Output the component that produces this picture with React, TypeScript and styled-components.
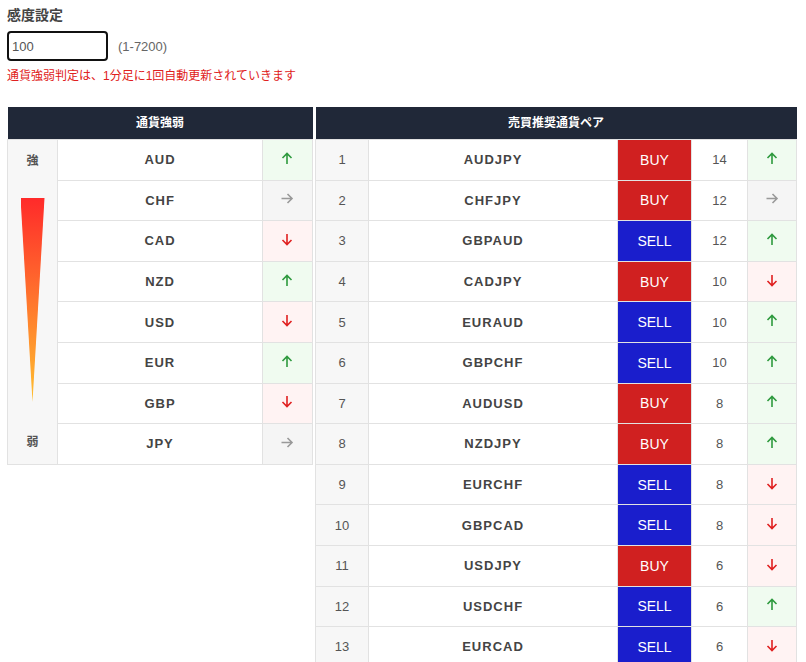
import React from "react";
import styled, { createGlobalStyle } from "styled-components";

type Dir = "up" | "right" | "down";

const currencies: { code: string; dir: Dir }[] = [
  { code: "AUD", dir: "up" },
  { code: "CHF", dir: "right" },
  { code: "CAD", dir: "down" },
  { code: "NZD", dir: "up" },
  { code: "USD", dir: "down" },
  { code: "EUR", dir: "up" },
  { code: "GBP", dir: "down" },
  { code: "JPY", dir: "right" },
];

const pairs: { pair: string; side: "BUY" | "SELL"; score: number; dir: Dir }[] = [
  { pair: "AUDJPY", side: "BUY", score: 14, dir: "up" },
  { pair: "CHFJPY", side: "BUY", score: 12, dir: "right" },
  { pair: "GBPAUD", side: "SELL", score: 12, dir: "up" },
  { pair: "CADJPY", side: "BUY", score: 10, dir: "down" },
  { pair: "EURAUD", side: "SELL", score: 10, dir: "up" },
  { pair: "GBPCHF", side: "SELL", score: 10, dir: "up" },
  { pair: "AUDUSD", side: "BUY", score: 8, dir: "up" },
  { pair: "NZDJPY", side: "BUY", score: 8, dir: "up" },
  { pair: "EURCHF", side: "SELL", score: 8, dir: "down" },
  { pair: "GBPCAD", side: "SELL", score: 8, dir: "down" },
  { pair: "USDJPY", side: "BUY", score: 6, dir: "down" },
  { pair: "USDCHF", side: "SELL", score: 6, dir: "up" },
  { pair: "EURCAD", side: "SELL", score: 6, dir: "down" },
];

const GlobalStyle = createGlobalStyle`
  body {
    margin: 0;
    font-family: "Liberation Sans", Arial, "Noto Sans CJK JP", sans-serif;
    color: #333;
    background: #fff;
  }
`;

const Page = styled.div`
  padding: 7px 7px 0 7px;
  height: 662px;
  box-sizing: border-box;
  overflow: hidden;
`;

const Label = styled.div`
  font-size: 14px;
  line-height: 16px;
  font-weight: bold;
  color: #444;
  margin-bottom: 8px;
`;

const InputRow = styled.div`
  display: flex;
  align-items: center;
  gap: 10px;
`;

const Input = styled.input`
  width: 101px;
  height: 30px;
  box-sizing: border-box;
  padding: 0 3px;
  border: 2px solid #111;
  border-radius: 4px;
  font-family: inherit;
  font-size: 13px;
  color: #555;
  outline: none;
`;

const Range = styled.span`
  font-size: 13px;
  color: #666;
`;

const Notice = styled.div`
  margin-top: 8px;
  font-size: 12px;
  line-height: 14px;
  color: #e02020;
`;

const Tables = styled.div`
  display: flex;
  gap: 2px;
  margin-top: 24px;
  align-items: flex-start;
`;

const Table = styled.table<{ $w: number }>`
  width: ${(p) => p.$w}px;
  border-collapse: collapse;
  table-layout: fixed;
`;

const Head = styled.th`
  background: #202838;
  color: #fff;
  font-size: 12px;
  line-height: 14px;
  height: 32px;
  padding: 0;
  font-weight: bold;
`;

const Cell = styled.td<{ $bg?: string }>`
  height: 39.6px;
  padding: 0;
  border: 1px solid #e2e2e2;
  text-align: center;
  font-size: 13px;
  color: #555;
  background: ${(p) => p.$bg || "#fff"};
`;

const Code = styled(Cell)`
  font-weight: bold;
  letter-spacing: 1px;
  color: #444;
`;

const Side = styled.td<{ $buy: boolean }>`
  padding: 0;
  border: 1px solid #e2e2e2;
  text-align: center;
  font-size: 14px;
  color: #fff;
  background: ${(p) => (p.$buy ? "#d02020" : "#1a1ecc")};
`;

const Scale = styled.td`
  background: #f7f7f7;
  border: 1px solid #e2e2e2;
  padding: 0;
  vertical-align: top;
`;

const ScaleInner = styled.div`
  height: 323px;
  display: flex;
  flex-direction: column;
  align-items: center;
  justify-content: space-between;
  padding: 11px 0 14px;
  box-sizing: border-box;
  font-size: 12px;
  font-weight: bold;
  color: #555;
`;

const Wedge = styled.div`
  width: 24px;
  height: 204px;
  background: linear-gradient(#ff2a2a, #ffc030);
  clip-path: polygon(0 0, 100% 0, 50% 100%);
`;

const arrowBg: Record<Dir, string> = { up: "#f0fbf0", right: "#f5f5f5", down: "#fff3f3" };
const arrowColor: Record<Dir, string> = { up: "#2e9a3e", right: "#999", down: "#e02020" };
const arrowRot: Record<Dir, number> = { up: 0, right: 90, down: 180 };

const Arrow: React.FC<{ dir: Dir }> = ({ dir }) => (
  <svg width="12" height="13" viewBox="0 0 12 13" style={{ transform: `rotate(${arrowRot[dir]}deg)` }}>
    <path d="M6 12V1.5M1.5 6L6 1.5 10.5 6" fill="none" stroke={arrowColor[dir]} strokeWidth="1.6" />
  </svg>
);

export default function App() {
  return (
    <Page>
      <GlobalStyle />
      <Label>感度設定</Label>
      <InputRow>
        <Input defaultValue="100" />
        <Range>(1-7200)</Range>
      </InputRow>
      <Notice>通貨強弱判定は、1分足に1回自動更新されていきます</Notice>
      <Tables>
        <Table $w={306}>
          <colgroup>
            <col style={{ width: 50 }} />
            <col />
            <col style={{ width: 50 }} />
          </colgroup>
          <thead>
            <tr>
              <Head colSpan={3}>通貨強弱</Head>
            </tr>
          </thead>
          <tbody>
            {currencies.map((c, i) => (
              <tr key={c.code}>
                {i === 0 && (
                  <Scale rowSpan={8}>
                    <ScaleInner>
                      <span>強</span>
                      <Wedge />
                      <span>弱</span>
                    </ScaleInner>
                  </Scale>
                )}
                <Code>{c.code}</Code>
                <Cell $bg={arrowBg[c.dir]}>
                  <Arrow dir={c.dir} />
                </Cell>
              </tr>
            ))}
          </tbody>
        </Table>
        <Table $w={482}>
          <colgroup>
            <col style={{ width: 53 }} />
            <col />
            <col style={{ width: 74 }} />
            <col style={{ width: 56 }} />
            <col style={{ width: 49 }} />
          </colgroup>
          <thead>
            <tr>
              <Head colSpan={5}>売買推奨通貨ペア</Head>
            </tr>
          </thead>
          <tbody>
            {pairs.map((p, i) => (
              <tr key={p.pair}>
                <Cell $bg="#f7f7f7">{i + 1}</Cell>
                <Code>{p.pair}</Code>
                <Side $buy={p.side === "BUY"}>{p.side}</Side>
                <Cell>{p.score}</Cell>
                <Cell $bg={arrowBg[p.dir]}>
                  <Arrow dir={p.dir} />
                </Cell>
              </tr>
            ))}
          </tbody>
        </Table>
      </Tables>
    </Page>
  );
}
